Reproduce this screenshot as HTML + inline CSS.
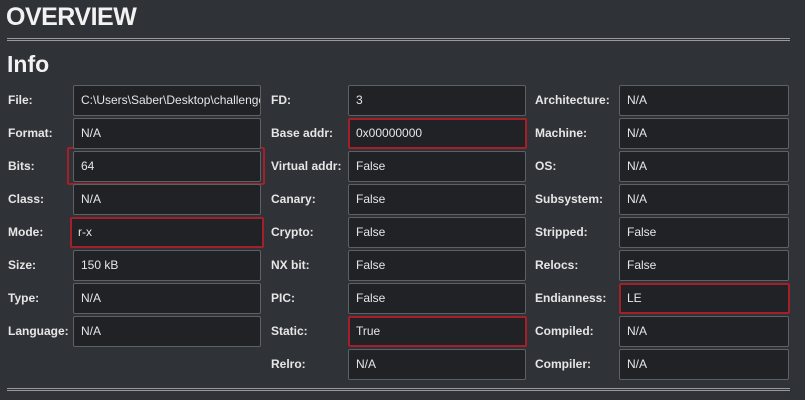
<!DOCTYPE html><html><head><style>
body{margin:0;width:805px;height:400px;background:#2f3237;font-family:"Liberation Sans",sans-serif;color:#e8e8e8;overflow:hidden;position:relative}
h1{position:absolute;left:6px;top:3px;margin:0;font-size:25px;font-weight:bold;color:#f2f2f2;letter-spacing:-0.5px}
h2{position:absolute;left:7px;top:51px;margin:0;font-size:23px;font-weight:bold;color:#f2f2f2}
.sep{position:absolute;left:7px;width:783px;height:1px;border-top:1px solid #9a9a9a;border-bottom:1px solid #9a9a9a}
.l{position:absolute;font-size:12px;font-weight:bold;color:#e6e6e6}
.b{position:absolute;height:29px;background:#202226;border:1px solid #5d6166;border-radius:2px;font-size:12px;line-height:29px;padding-left:7px;box-sizing:content-box;white-space:nowrap;overflow:hidden;color:#e6e6e6}
.r{border-color:#a3202a;border-width:2px;height:27px;line-height:27px;padding-left:6px}
.o{position:absolute;border:2px solid #a3202a;border-radius:2px}
</style></head><body>
<h1>OVERVIEW</h1><div class="sep" style="top:38px"></div>
<h2>Info</h2>
<div class="sep" style="top:388px"></div>
<div class="o" style="left:67px;top:147px;width:194px;height:34px"></div>
<div id="c"></div>
<script>
var rows=[
[["File:","C:\\Users\\Saber\\Desktop\\challenge.exe"],["FD:","3"],["Architecture:","N/A"]],
[["Format:","N/A"],["Base addr:","0x00000000",1],["Machine:","N/A"]],
[["Bits:","64"],["Virtual addr:","False"],["OS:","N/A"]],
[["Class:","N/A"],["Canary:","False"],["Subsystem:","N/A"]],
[["Mode:","r-x",1],["Crypto:","False"],["Stripped:","False"]],
[["Size:","150 kB"],["NX bit:","False"],["Relocs:","False"]],
[["Type:","N/A"],["PIC:","False"],["Endianness:","LE",1]],
[["Language:","N/A"],["Static:","True",1],["Compiled:","N/A"]],
[null,["Relro:","N/A"],["Compiler:","N/A"]]];
var cols=[[8,73,179],[271,348,169],[535,619,161]];
var h="";
rows.forEach(function(r,i){var t=85+33*i;r.forEach(function(c,j){if(!c)return;var k=cols[j];
var x=k[1],w=k[2];
if(c[2]&&j==0){x=70;w=184;}
h+='<div class="l" style="left:'+k[0]+'px;top:'+(t+8)+'px">'+c[0]+'</div>';
h+='<div class="b'+(c[2]?' r':'')+'" style="left:'+x+'px;top:'+t+'px;width:'+w+'px">'+c[1]+'</div>';});});
document.getElementById("c").innerHTML=h;
</script>
</body></html>
